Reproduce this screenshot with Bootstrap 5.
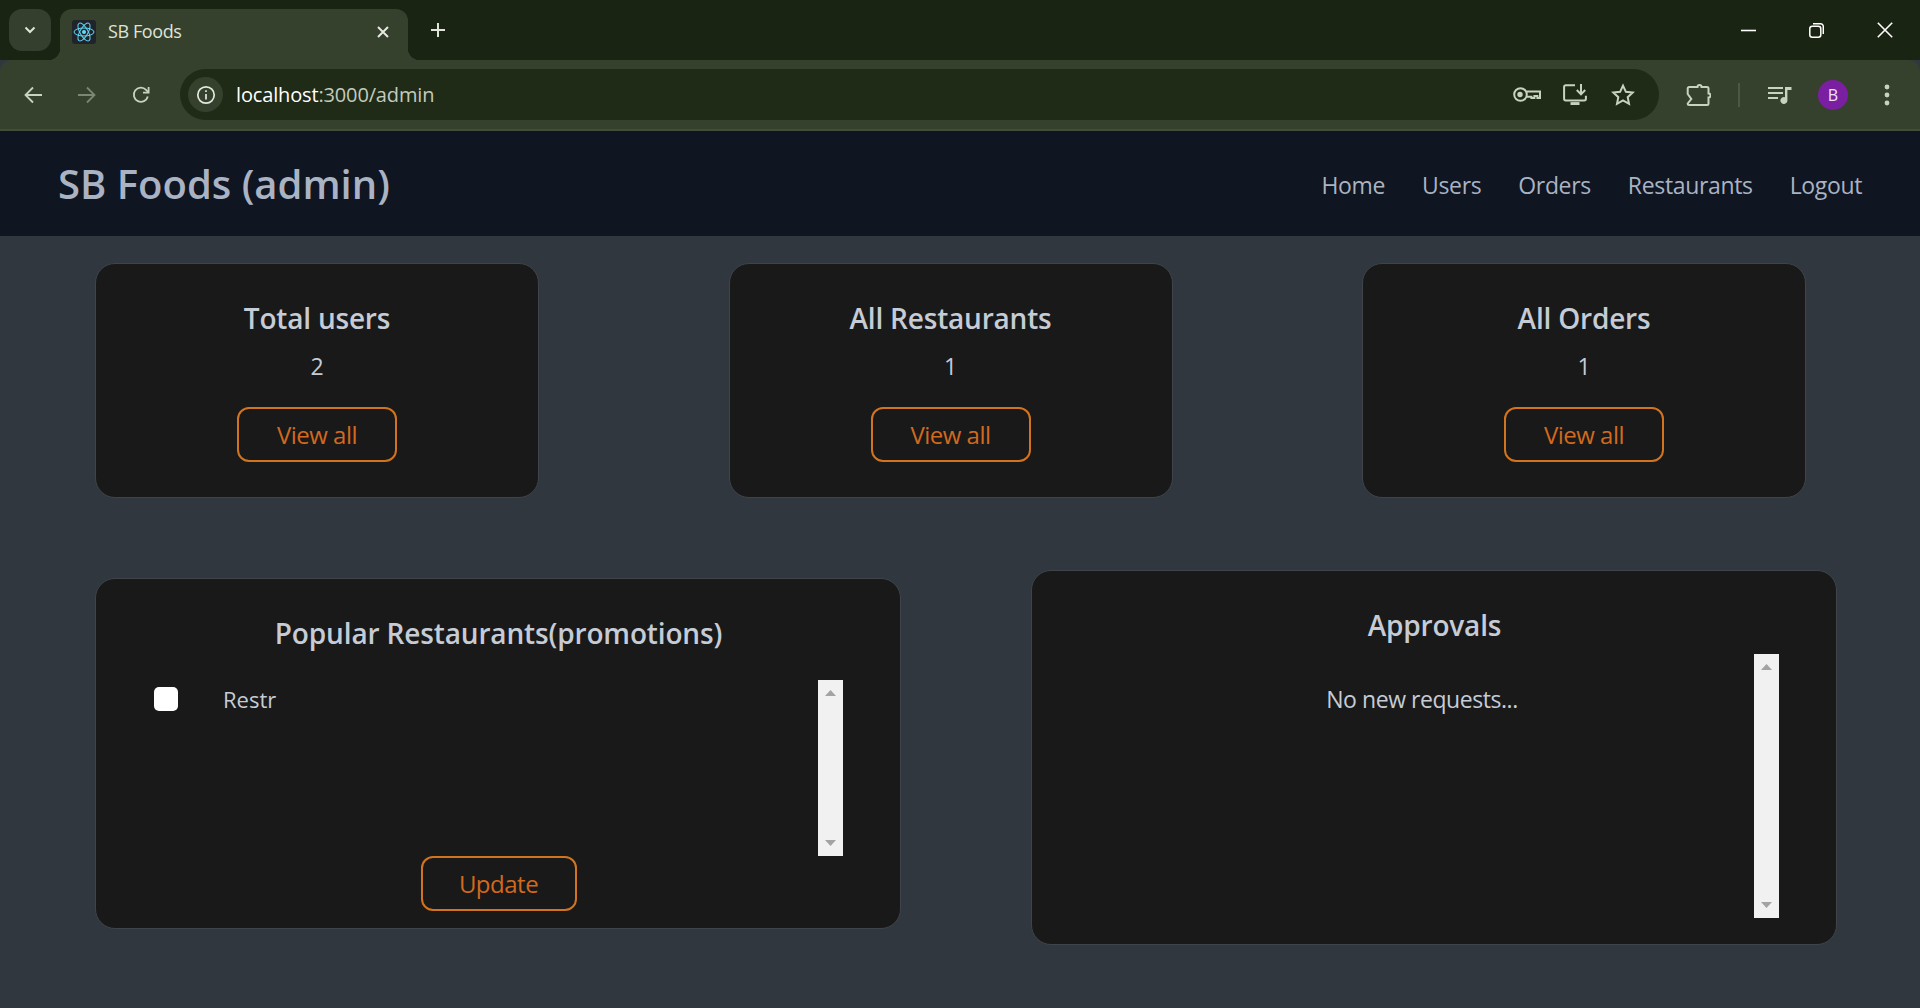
<!DOCTYPE html>
<html lang="en">

<head>
    <meta charset="UTF-8">
    <meta name="viewport" content="width=device-width, initial-scale=1.0">
    <title>SB Foods</title>
    <link href="https://cdn.jsdelivr.net/npm/bootstrap@5.3.0/dist/css/bootstrap.min.css" rel="stylesheet">
    <style>
        html, body { height: 100%; overflow: hidden; }
        body { background: #30373f; font-family: "Open Sans", "Liberation Sans", sans-serif; font-size: 20px; color: #c5ccd6; }

        /* browser frame */
        .tabstrip { height: 60px; background: #1a2412; padding-left: 9px; }
        .tab-search { width: 42px; height: 42px; margin-top: 9px; border-radius: 13px; background: #353f2d; }
        .tab-item { width: 348px; height: 51px; margin-top: 9px; margin-left: 9px; padding: 0 18px 6px 12px; background: #36412d; border-radius: 12px 12px 0 0; color: #dfe3da; font-size: 18px; letter-spacing: -.4px; }
        .tab-item::before, .tab-item::after { content: ""; position: absolute; bottom: 0; width: 12px; height: 12px; }
        .tab-item::before { left: -12px; background: radial-gradient(circle at 0 0, transparent 12px, #36412d 12.5px); }
        .tab-item::after { right: -12px; background: radial-gradient(circle at 100% 0, transparent 12px, #36412d 12.5px); }
        .favicon-box { width: 24px; height: 24px; margin-right: 12px; background: #20232a; border-radius: 3px; }
        .new-tab { height: 60px; margin-left: 22px; }
        .win-controls { width: 179px; padding-left: 0; padding-right: 27px; }
        .toolbar { height: 71px; background: #36412d; border-bottom: 2px solid #434e3a; border-radius: 12px 12px 0 0; padding: 0 24px; }
        .tool-gap { gap: 36px; }
        .addr-bar { height: 51px; width: 1479px; margin-left: 30px; padding-left: 8px; padding-right: 24px; background: #1f2a17; border-radius: 26px; font-size: 20px; letter-spacing: -.15px; color: #fff; }
        .addr-info { width: 35px; height: 35px; margin-right: 13px; background: #36412d; border-radius: 50%; }
        .addr-dim { color: #c4cabd; }
        .addr-icons { gap: 24px; }
        .key-icon { margin-right: -2px; }
        .tool-sep { width: 2px; height: 24px; margin: 0 28px 0 27px; background: #4c5842; }
        .avatar-dot { width: 30px; height: 30px; margin: 0 36px 0 26px; background: #7b1fa2; border-radius: 50%; color: #f1e3f5; font-size: 16px; }
        .more-dots { margin-right: 6px; }

        /* app navbar */
        .app-nav { height: 105px; background: #0f1521; padding: 0 58px 0 58px; }
        .app-brand { font-size: 40px; font-weight: 600; line-height: 1.2; letter-spacing: 0; color: #a9b3c3; }
        .app-links { gap: 37px; padding-top: 4px; }
        .app-links a { font-size: 23px; letter-spacing: -.35px; color: #a9b3c3; text-decoration: none; }

        /* panels */
        .stat-row { padding: 27px 114px 0 95px; }
        .stat-panel { width: 444px; padding: 36px 0 35px; }
        .panel-dark { background: #191919; border: 1px solid #3f444a; border-radius: 20px; color: #c5ccd6; }
        .panel-title { margin: 0; font-size: 28px; line-height: 36px; font-weight: 600; letter-spacing: -.2px; }
        .stat-num { margin: 15px 0 26px; font-size: 23px; line-height: 30px; }
        .btn-orange { height: 55px; border: 2px solid #d2741f; border-radius: 12px; background: transparent; color: #d2691e; font-size: 24px; line-height: 1; letter-spacing: -.5px; padding: 0; }
        .btn-view { width: 160px; }
        .btn-update { width: 156px; margin-left: 25px; }

        .lower-row { padding: 72px 83px 0 95px; }
        .promo-panel { width: 806px; margin-top: 8px; padding: 36px 57px 17px 33px; }
        .approve-panel { width: 806px; padding: 36px 57px 26px 33px; }
        .promo-panel .panel-title { padding-left: 25px; margin-bottom: 29px; letter-spacing: -.15px; }
        .approve-panel .panel-title { padding-left: 25px; margin-bottom: 11px; }
        .promo-list { height: 176px; }
        .approve-list { height: 264px; }
        .list-item { padding: 2px 0 0 25px; gap: 45px; font-size: 22px; }
        .list-item .form-check-input { width: 24px; height: 24px; margin: 0; border-radius: 5px; background-color: #fff; border: 0; flex: none; }
        .list-item span { position: relative; top: 1px; }
        .empty-note { padding: 28px 0 0 25px; font-size: 23px; letter-spacing: -.45px; }
        .fake-scroll { width: 25px; background: #f1f1f1; padding: 10px 7px; }
    </style>
</head>

<body>

    <!-- Browser frame -->
    <div class="tabstrip d-flex">
        <div class="tab-search d-flex align-items-center justify-content-center">
            <svg width="14" height="14" viewBox="0 0 14 14"><path d="M2.5 4.500 7 9l4.500-4.500" fill="none" stroke="#dfe3da" stroke-width="2"/></svg>
        </div>
        <div class="tab-item position-relative d-flex align-items-center">
            <span class="favicon-box d-flex align-items-center justify-content-center flex-shrink-0">
                <svg width="22" height="22" viewBox="-11 -11 22 22" fill="none" stroke="#61dafb" stroke-width="1">
                    <ellipse rx="10" ry="4"/>
                    <ellipse rx="10" ry="4" transform="rotate(60)"/>
                    <ellipse rx="10" ry="4" transform="rotate(120)"/>
                    <circle r="2" fill="#61dafb" stroke="none"/>
                </svg>
            </span>
            <span>SB Foods</span>
            <svg class="ms-auto" width="14" height="14" viewBox="0 0 14 14"><path d="M2 2l10 10M12 2 2 12" stroke="#e6e9e2" stroke-width="2"/></svg>
        </div>
        <div class="new-tab d-flex align-items-center">
            <svg width="16" height="16" viewBox="0 0 16 16"><path d="M8 1v14M1 8h14" stroke="#dfe3da" stroke-width="2"/></svg>
        </div>
        <div class="win-controls ms-auto d-flex align-items-center justify-content-between">
            <svg width="15" height="15" viewBox="0 0 15 15"><path d="M0 7.500h15" stroke="#fff" stroke-width="1.6"/></svg>
            <svg width="15" height="15" viewBox="0 0 15 15" fill="none" stroke="#fff" stroke-width="1.5"><rect x=".8" y="3.200" width="11" height="11" rx="2.500"/><path d="M4 .8h7.500a2.800 2.800 0 0 1 2.800 2.800V11"/></svg>
            <svg width="16" height="16" viewBox="0 0 16 16"><path d="M.8.8l14.400 14.400M15.200.8.800 15.200" stroke="#fff" stroke-width="1.6"/></svg>
        </div>
    </div>

    <div class="toolbar d-flex align-items-center">
        <div class="d-flex align-items-center tool-gap">
            <svg width="18" height="18" viewBox="0 0 18 18" fill="none" stroke="#c9d1bf" stroke-width="1.8"><path d="M18 9H2M9 1.500 1.500 9 9 16.500"/></svg>
            <svg width="18" height="18" viewBox="0 0 18 18" fill="none" stroke="#7c8672" stroke-width="1.8"><path d="M0 9h16M9 1.500 16.500 9 9 16.500"/></svg>
            <svg width="18" height="18" viewBox="0 0 18 18" fill="none" stroke="#c9d1bf" stroke-width="1.8"><path d="M15.800 10.500a7.100 7.100 0 1 1-1.700-6.600L16 6"/><path d="M16.600 1v5.600H11"/></svg>
        </div>
        <div class="addr-bar d-flex align-items-center">
            <span class="addr-info d-flex align-items-center justify-content-center">
                <svg width="20" height="20" viewBox="0 0 20 20" fill="none" stroke="#e4e8df" stroke-width="1.7"><circle cx="10" cy="10" r="8.200"/><path d="M10 9v5.500"/><path d="M10 5.200v1.900"/></svg>
            </span>
            <span>localhost<span class="addr-dim">:3000/admin</span></span>
            <div class="ms-auto d-flex align-items-center addr-icons">
                <svg class="key-icon" width="28" height="15" viewBox="0 0 28 15" fill="none" stroke="#c9d1bf" stroke-width="2"><circle cx="7.500" cy="7.500" r="6.300"/><circle cx="7" cy="7.500" r="1.700" fill="#c9d1bf"/><path d="M13.500 4.500H27v6.500h-2.600V9h-3v2h-3V9.800h-4.600"/></svg>
                <svg width="24" height="21" viewBox="0 0 24 21" fill="none" stroke="#c9d1bf" stroke-width="2"><path d="M12 1.200H2.800a1.700 1.700 0 0 0-1.700 1.700v11.800c0 .9.800 1.700 1.700 1.700h18.500c.9 0 1.600-.8 1.600-1.700v-3"/><path d="M18 0v10M13.800 6 18 10.400 22.200 6"/><path d="M7.500 19.600h9" stroke-width="3"/></svg>
                <svg width="24" height="23" viewBox="0 0 24 23" fill="none" stroke="#c9d1bf" stroke-width="2"><path d="M12 2.600l2.900 6.200 6.800.8-5 4.600 1.300 6.700-6-3.400-6 3.400 1.300-6.700-5-4.600 6.800-.8z"/></svg>
            </div>
        </div>
        <div class="d-flex align-items-center ms-auto">
            <svg width="25" height="24" viewBox="0 0 25 24" fill="none" stroke="#c9d1bf" stroke-width="2"><path d="M8 4h3.500a2 2 0 1 1 4 0H21a1.500 1.500 0 0 1 1.500 1.500v5a2 2 0 1 1 0 4v6a1.500 1.500 0 0 1-1.500 1.500H3.200a1.500 1.500 0 0 1-1.500-1.500l3.600-4.500-3.600-5V5.500A1.500 1.500 0 0 1 3.200 4z"/></svg>
            <span class="tool-sep"></span>
            <svg width="24" height="18" viewBox="0 0 24 18" fill="#c9d1bf"><path d="M0 1h15v2H0zM0 6h15v2H0zM0 11h10v2H0z"/><path d="M17 1h6.500v3H19.400v10.500a3.500 3.500 0 1 1-2.400-3.300z"/></svg>
            <span class="avatar-dot d-flex align-items-center justify-content-center">B</span>
            <svg class="more-dots" width="6" height="22" viewBox="0 0 6 22" fill="#c9d1bf"><circle cx="3" cy="3" r="2.400"/><circle cx="3" cy="11" r="2.400"/><circle cx="3" cy="19" r="2.400"/></svg>
        </div>
    </div>

    <!-- App navbar -->
    <nav class="navbar app-nav d-flex justify-content-between align-items-center">
        <span class="app-brand">SB Foods (admin)</span>
        <div class="d-flex app-links">
            <a href="#">Home</a>
            <a href="#">Users</a>
            <a href="#">Orders</a>
            <a href="#">Restaurants</a>
            <a href="#">Logout</a>
        </div>
    </nav>

    <!-- Stat cards -->
    <div class="stat-row d-flex justify-content-between">
        <div class="panel-dark stat-panel text-center">
            <h4 class="panel-title">Total users</h4>
            <p class="stat-num">2</p>
            <button class="btn btn-orange btn-view">View all</button>
        </div>
        <div class="panel-dark stat-panel text-center">
            <h4 class="panel-title">All Restaurants</h4>
            <p class="stat-num">1</p>
            <button class="btn btn-orange btn-view">View all</button>
        </div>
        <div class="panel-dark stat-panel text-center">
            <h4 class="panel-title">All Orders</h4>
            <p class="stat-num">1</p>
            <button class="btn btn-orange btn-view">View all</button>
        </div>
    </div>

    <!-- Promotions and approvals -->
    <div class="lower-row d-flex justify-content-between align-items-start">
        <div class="panel-dark promo-panel text-center">
            <h4 class="panel-title">Popular Restaurants(promotions)</h4>
            <div class="promo-list d-flex">
                <div class="flex-grow-1">
                    <div class="list-item d-flex align-items-center text-start">
                        <input class="form-check-input" type="checkbox" aria-label="Restr">
                        <span>Restr</span>
                    </div>
                </div>
                <div class="fake-scroll d-flex flex-column justify-content-between align-items-center">
                    <svg width="11" height="6" viewBox="0 0 11 6" fill="#a3a3a3"><path d="M5.500 0 11 6H0z"/></svg>
                    <svg width="11" height="6" viewBox="0 0 11 6" fill="#a3a3a3"><path d="M0 0h11L5.500 6z"/></svg>
                </div>
            </div>
            <button class="btn btn-orange btn-update">Update</button>
        </div>

        <div class="panel-dark approve-panel text-center">
            <h4 class="panel-title">Approvals</h4>
            <div class="approve-list d-flex">
                <div class="flex-grow-1 empty-note">No new requests...</div>
                <div class="fake-scroll d-flex flex-column justify-content-between align-items-center">
                    <svg width="11" height="6" viewBox="0 0 11 6" fill="#a3a3a3"><path d="M5.500 0 11 6H0z"/></svg>
                    <svg width="11" height="6" viewBox="0 0 11 6" fill="#a3a3a3"><path d="M0 0h11L5.500 6z"/></svg>
                </div>
            </div>
        </div>
    </div>

    <script src="https://cdn.jsdelivr.net/npm/bootstrap@5.3.0/dist/js/bootstrap.bundle.min.js"></script>

</body>

</html>
